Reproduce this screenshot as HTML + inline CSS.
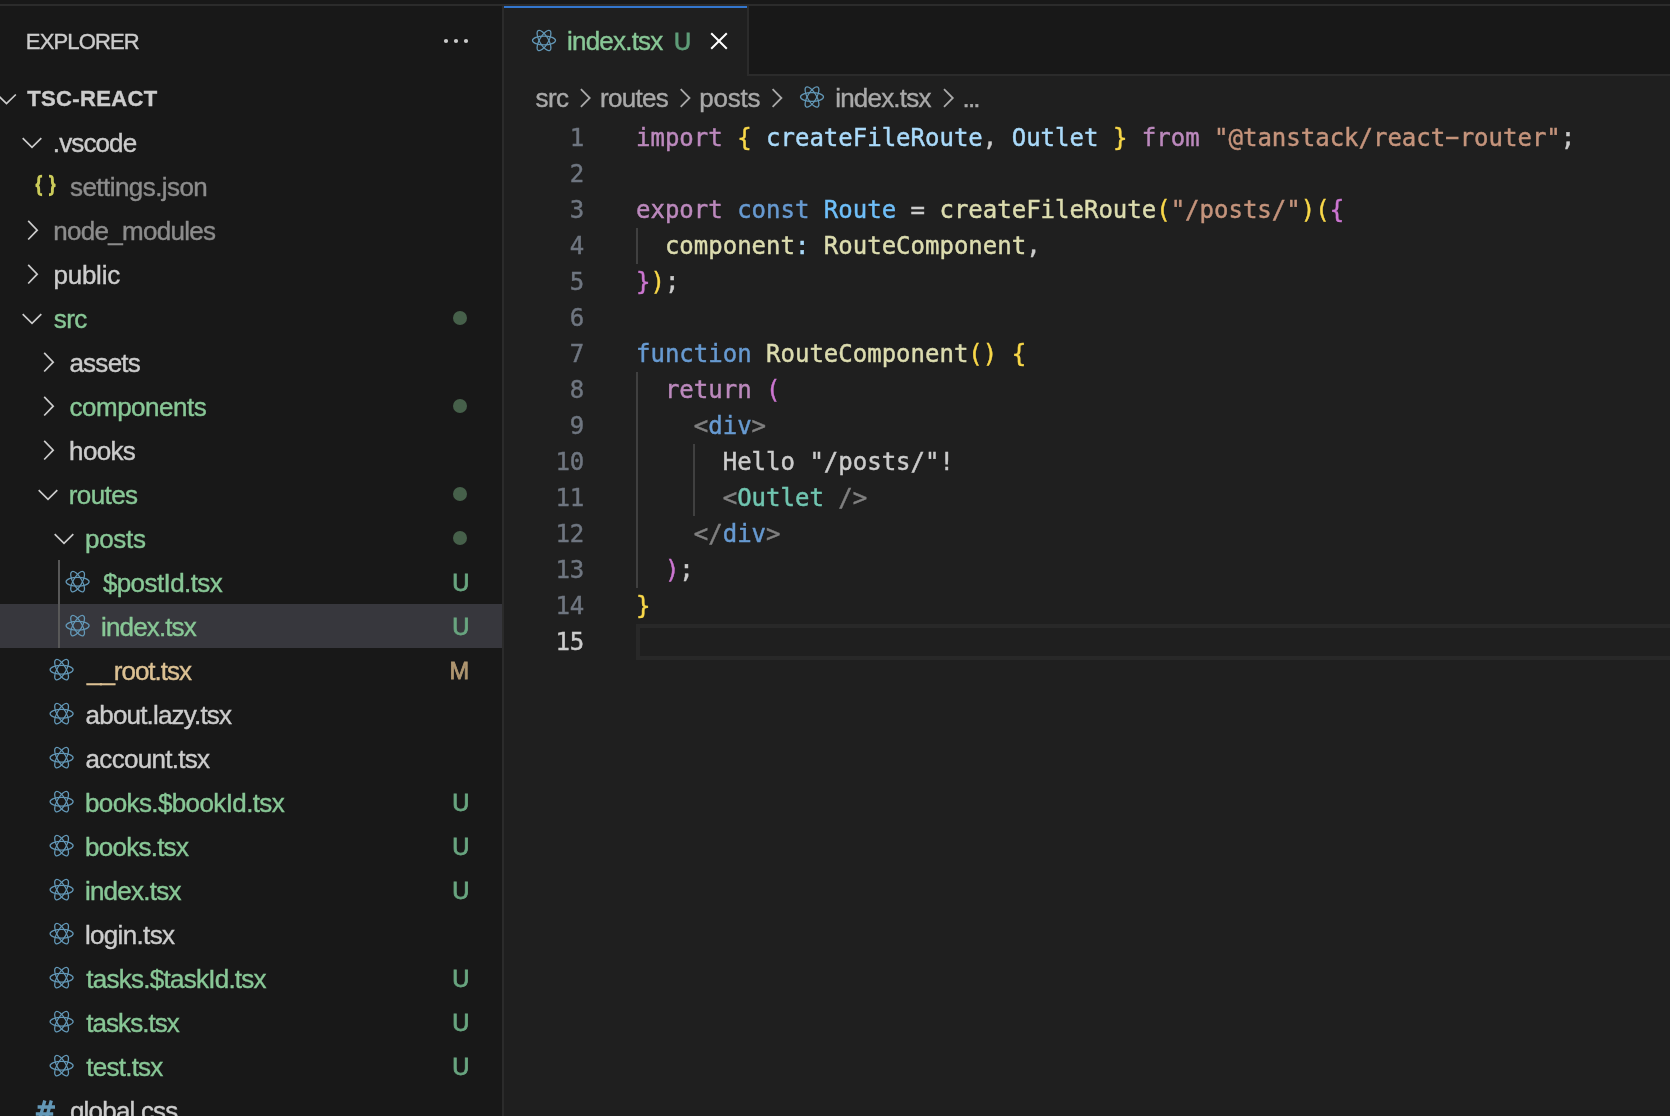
<!DOCTYPE html>
<html lang="en"><head><meta charset="utf-8"><title>index.tsx — tsc-react</title>
<style>
html,body{margin:0;padding:0;background:#181818;}
body{width:1670px;height:1116px;overflow:hidden;position:relative;font-family:"Liberation Sans",sans-serif;color:#cccccc;}
.abs{position:absolute;}
#topline{left:0;top:4px;width:1670px;height:2px;background:#2b2b2b;}
#side{will-change:transform;left:0;top:6px;width:502px;height:1110px;background:#181818;overflow:hidden;}
#sideborder{left:502px;top:6px;width:2px;height:1110px;background:#2b2b2b;}
#ed{will-change:transform;left:504px;top:6px;width:1166px;height:1110px;background:#1f1f1f;overflow:hidden;}
#tabbar{left:0;top:0;width:1166px;height:68px;background:#181818;border-bottom:2px solid #2b2b2b;}
#tab{left:0;top:0;width:243px;height:70px;background:#1f1f1f;border-right:2px solid #2b2b2b;}
#tabtop{left:0;top:0;width:243px;height:2px;background:#3376cd;}
.ui{position:absolute;white-space:nowrap;font-size:26px;line-height:44px;height:44px;-webkit-text-stroke:0.4px currentColor;}
.row{position:absolute;left:0;width:502px;height:44px;}
.sel{background:#37373d;}
.badge{position:absolute;white-space:nowrap;font-size:23.6px;line-height:44px;height:44px;text-align:right;right:32.8px;top:1px;-webkit-text-stroke:0.8px currentColor;}
.dot{position:absolute;left:452.7px;top:14.7px;width:14.6px;height:14.6px;border-radius:50%;background:#46604a;}
.code{position:absolute;left:132px;white-space:pre;font-family:"DejaVu Sans Mono","Liberation Mono",monospace;font-size:24px;line-height:36px;height:36px;color:#cccccc;-webkit-text-stroke:0.45px currentColor;}
.ln{position:absolute;left:0;width:80.3px;-webkit-text-stroke:0.45px currentColor;text-align:right;white-space:pre;font-family:"DejaVu Sans Mono","Liberation Mono",monospace;font-size:24px;line-height:36px;height:36px;color:#6f7680;}
.k{color:#bc89bd}.b{color:#679ad1}.v{color:#aadafa}.c{color:#6fbff9}.f{color:#dcdcaf}.s{color:#c5947c}
.y{color:#f9d849}.p{color:#cc76d1}.t{color:#808080}.o{color:#71c6b1}.w{color:#cccccc}
.hy{display:inline-block;transform:scaleX(1.9) translateY(-1px);}
.guide{position:absolute;width:2px;background:#404040;}
svg{position:absolute;overflow:visible;}
</style></head><body>
<svg width="0" height="0" style="position:absolute"><defs>
<g id="react" fill="none" stroke="#6398b7" stroke-width="1.25">
<ellipse cx="0" cy="0" rx="11.5" ry="4.4"/>
<ellipse cx="0" cy="0" rx="11.5" ry="4.4" transform="rotate(60)"/>
<ellipse cx="0" cy="0" rx="11.5" ry="4.4" transform="rotate(120)"/>
</g>
<path id="chd" d="M-9.3,-4.5 L0,4.6 L9.3,-4.5" fill="none" stroke="#cccccc" stroke-width="1.7"/>
<path id="chr" d="M-4.5,-9.3 L4.5,0 L-4.5,9.3" fill="none" stroke="#cccccc" stroke-width="1.7"/>
<path id="bcr" d="M-4.4,-8.8 L4.4,0 L-4.4,8.8" fill="none" stroke="#a9a9a9" stroke-width="1.8"/>
</defs></svg>
<div id="topline" class="abs"></div>

<div id="side" class="abs">
<div class="ui" style="left:25.86px;top:14px;font-size:22px;color:#cccccc;letter-spacing:-0.853px">EXPLORER</div>
<svg class="abs" style="left:0;top:0" width="502" height="80"><circle cx="446" cy="35" r="2.1" fill="#cccccc"/><circle cx="456" cy="35" r="2.1" fill="#cccccc"/><circle cx="466" cy="35" r="2.1" fill="#cccccc"/></svg>
<svg class="abs" style="left:0;top:70px" width="40" height="44"><use href="#chd" x="6.5" y="23"/></svg>
<div class="ui" style="left:27.29px;top:71px;font-size:22px;font-weight:bold;color:#cccccc;letter-spacing:0.362px">TSC-REACT</div>
<div class="row" style="top:114px">
<svg style="left:0;top:0" width="110" height="44"><use href="#chd" x="32" y="22.7"/></svg>
<div class="ui" style="left:52.84px;top:1px;color:#cccccc;letter-spacing:-0.889px">.vscode</div>
</div>
<div class="row" style="top:158px">
<svg style="left:0;top:0" width="110" height="44"><g fill="none" stroke="#cbcb5a" stroke-width="2.9"><path transform="translate(34.9,54.4) translate(0,-44)" d="M7.2,1.7 C4.4,1.7 3.8,2.4 3.8,4.8 L3.8,7.4 C3.8,9.8 2.9,11 0.6,11 C2.9,11 3.8,12.2 3.8,14.6 L3.8,17.2 C3.8,19.6 4.4,20.3 7.2,20.3"/><path transform="translate(56.2,54.4) translate(0,-44) scale(-1,1)" d="M7.2,1.7 C4.4,1.7 3.8,2.4 3.8,4.8 L3.8,7.4 C3.8,9.8 2.9,11 0.6,11 C2.9,11 3.8,12.2 3.8,14.6 L3.8,17.2 C3.8,19.6 4.4,20.3 7.2,20.3"/></g></svg>
<div class="ui" style="left:70.04px;top:1px;color:#8c8c8c;letter-spacing:-0.563px">settings.json</div>
</div>
<div class="row" style="top:202px">
<svg style="left:0;top:0" width="110" height="44"><use href="#chr" x="32.7" y="22.2"/></svg>
<div class="ui" style="left:53.22px;top:1px;color:#8c8c8c;letter-spacing:-0.714px">node_modules</div>
</div>
<div class="row" style="top:246px">
<svg style="left:0;top:0" width="110" height="44"><use href="#chr" x="32.7" y="22.2"/></svg>
<div class="ui" style="left:53.51px;top:1px;color:#cccccc;letter-spacing:-0.255px">public</div>
</div>
<div class="row" style="top:290px">
<svg style="left:0;top:0" width="110" height="44"><use href="#chd" x="32" y="22.7"/></svg>
<div class="ui" style="left:53.79px;top:1px;color:#88c796;letter-spacing:-0.629px">src</div>
<div class="dot"></div>
</div>
<div class="row" style="top:334px">
<svg style="left:0;top:0" width="110" height="44"><use href="#chr" x="48.7" y="22.2"/></svg>
<div class="ui" style="left:69.38px;top:1px;color:#cccccc;letter-spacing:-0.734px">assets</div>
</div>
<div class="row" style="top:378px">
<svg style="left:0;top:0" width="110" height="44"><use href="#chr" x="48.7" y="22.2"/></svg>
<div class="ui" style="left:69.59px;top:1px;color:#88c796;letter-spacing:-0.509px">components</div>
<div class="dot"></div>
</div>
<div class="row" style="top:422px">
<svg style="left:0;top:0" width="110" height="44"><use href="#chr" x="48.7" y="22.2"/></svg>
<div class="ui" style="left:69.12px;top:1px;color:#cccccc;letter-spacing:-0.654px">hooks</div>
</div>
<div class="row" style="top:466px">
<svg style="left:0;top:0" width="110" height="44"><use href="#chd" x="48" y="22.7"/></svg>
<div class="ui" style="left:68.69px;top:1px;color:#88c796;letter-spacing:-0.583px">routes</div>
<div class="dot"></div>
</div>
<div class="row" style="top:510px">
<svg style="left:0;top:0" width="110" height="44"><use href="#chd" x="64" y="22.7"/></svg>
<div class="ui" style="left:85.09px;top:1px;color:#88c796;letter-spacing:-0.334px">posts</div>
<div class="dot"></div>
</div>
<div class="row" style="top:554px">
<svg style="left:0;top:0" width="110" height="44"><use href="#react" x="77.6" y="21.7"/></svg>
<div class="ui" style="left:102.88px;top:1px;color:#88c796;letter-spacing:-0.589px">$postId.tsx</div>
<div class="badge" style="color:#69a680">U</div>
</div>
<div class="row sel" style="top:598px">
<svg style="left:0;top:0" width="110" height="44"><use href="#react" x="77.6" y="21.7"/></svg>
<div class="ui" style="left:101.06px;top:1px;color:#88c796;letter-spacing:-0.862px">index.tsx</div>
<div class="badge" style="color:#69a680">U</div>
</div>
<div class="row" style="top:642px">
<svg style="left:0;top:0" width="110" height="44"><use href="#react" x="61.6" y="21.7"/></svg>
<div class="ui" style="left:86.96px;top:1px;color:#dcc193;letter-spacing:-1.017px">__root.tsx</div>
<div class="badge" style="color:#af9670">M</div>
</div>
<div class="row" style="top:686px">
<svg style="left:0;top:0" width="110" height="44"><use href="#react" x="61.6" y="21.7"/></svg>
<div class="ui" style="left:85.6px;top:1px;color:#cccccc;letter-spacing:-0.816px">about.lazy.tsx</div>
</div>
<div class="row" style="top:730px">
<svg style="left:0;top:0" width="110" height="44"><use href="#react" x="61.6" y="21.7"/></svg>
<div class="ui" style="left:85.6px;top:1px;color:#cccccc;letter-spacing:-0.702px">account.tsx</div>
</div>
<div class="row" style="top:774px">
<svg style="left:0;top:0" width="110" height="44"><use href="#react" x="61.6" y="21.7"/></svg>
<div class="ui" style="left:84.97px;top:1px;color:#88c796;letter-spacing:-0.613px">books.$bookId.tsx</div>
<div class="badge" style="color:#69a680">U</div>
</div>
<div class="row" style="top:818px">
<svg style="left:0;top:0" width="110" height="44"><use href="#react" x="61.6" y="21.7"/></svg>
<div class="ui" style="left:85.0px;top:1px;color:#88c796;letter-spacing:-0.744px">books.tsx</div>
<div class="badge" style="color:#69a680">U</div>
</div>
<div class="row" style="top:862px">
<svg style="left:0;top:0" width="110" height="44"><use href="#react" x="61.6" y="21.7"/></svg>
<div class="ui" style="left:84.88px;top:1px;color:#88c796;letter-spacing:-0.756px">index.tsx</div>
<div class="badge" style="color:#69a680">U</div>
</div>
<div class="row" style="top:906px">
<svg style="left:0;top:0" width="110" height="44"><use href="#react" x="61.6" y="21.7"/></svg>
<div class="ui" style="left:84.92px;top:1px;color:#cccccc;letter-spacing:-0.663px">login.tsx</div>
</div>
<div class="row" style="top:950px">
<svg style="left:0;top:0" width="110" height="44"><use href="#react" x="61.6" y="21.7"/></svg>
<div class="ui" style="left:86.37px;top:1px;color:#88c796;letter-spacing:-0.746px">tasks.$taskId.tsx</div>
<div class="badge" style="color:#69a680">U</div>
</div>
<div class="row" style="top:994px">
<svg style="left:0;top:0" width="110" height="44"><use href="#react" x="61.6" y="21.7"/></svg>
<div class="ui" style="left:86.37px;top:1px;color:#88c796;letter-spacing:-0.974px">tasks.tsx</div>
<div class="badge" style="color:#69a680">U</div>
</div>
<div class="row" style="top:1038px">
<svg style="left:0;top:0" width="110" height="44"><use href="#react" x="61.6" y="21.7"/></svg>
<div class="ui" style="left:86.37px;top:1px;color:#88c796;letter-spacing:-0.767px">test.tsx</div>
<div class="badge" style="color:#69a680">U</div>
</div>
<div class="row" style="top:1082px">
<svg style="left:0;top:0" width="110" height="44"><g fill="none" stroke="#6398b7" stroke-width="3.3"><path d="M44.8,12.5 L39.3,32.5 M51.3,12.5 L45.8,32.5 M37.6,19 L55,19 M35.8,26 L53.2,26"/></g></svg>
<div class="ui" style="left:69.94px;top:1px;color:#cccccc;letter-spacing:-0.804px">global.css</div>
</div>
<div class="guide" style="left:58px;top:554px;height:88px;background:#585858"></div>
</div>
<div id="sideborder" class="abs"></div>
<div id="ed" class="abs">
<div id="tabbar" class="abs"></div>
<div id="tab" class="abs"><div id="tabtop" class="abs"></div>
<svg style="left:0;top:0" width="243" height="70"><use href="#react" x="40" y="34.5"/><path d="M207.2,27.2 L222.8,42.8 M222.8,27.2 L207.2,42.8" stroke="#ffffff" stroke-width="2" fill="none"/></svg>
<div class="ui" style="left:62.96px;top:13.0px;color:#88c796;letter-spacing:-0.777px">index.tsx</div>
<div class="ui" style="left:170px;top:14px;font-size:23.6px;-webkit-text-stroke:0.8px currentColor;color:#5f9d78">U</div>
</div>
<div class="ui" style="left:31.52px;top:70.0px;color:#a9a9a9;letter-spacing:-0.579px">src</div>
<div class="ui" style="left:95.99px;top:70.0px;color:#a9a9a9;letter-spacing:-0.72px">routes</div>
<div class="ui" style="left:195.15px;top:70.0px;color:#a9a9a9;letter-spacing:-0.198px">posts</div>
<div class="ui" style="left:331.16px;top:70.0px;color:#a9a9a9;letter-spacing:-0.791px">index.tsx</div>
<div class="ui" style="left:458.5px;top:70.0px;color:#a9a9a9;letter-spacing:-1.8px">...</div>
<svg style="left:0;top:70px" width="600" height="44"><use href="#bcr" x="81.29999999999995" y="22"/><use href="#bcr" x="181.10000000000002" y="22"/><use href="#bcr" x="273" y="22"/><use href="#bcr" x="444.4" y="22"/><use href="#react" x="308" y="21"/></svg>
<div class="abs" style="left:132px;top:618px;width:1100px;height:28px;border:4px solid #282828;"></div>
<div class="ln" style="top:114px;color:#6f7680">1</div>
<div class="code" style="top:114px"><span class="k">import</span> <span class="y">{</span> <span class="v">createFileRoute</span>, <span class="v">Outlet</span> <span class="y">}</span> <span class="k">from</span> <span class="s">"@tanstack/react<span class="hy">-</span>router"</span>;</div>
<div class="ln" style="top:150px;color:#6f7680">2</div>
<div class="ln" style="top:186px;color:#6f7680">3</div>
<div class="code" style="top:186px"><span class="k">export</span> <span class="b">const</span> <span class="c">Route</span> = <span class="f">createFileRoute</span><span class="y">(</span><span class="s">"/posts/"</span><span class="y">)(</span><span class="p">{</span></div>
<div class="ln" style="top:222px;color:#6f7680">4</div>
<div class="code" style="top:222px">  <span class="f">component</span><span class="v">:</span> <span class="f">RouteComponent</span>,</div>
<div class="ln" style="top:258px;color:#6f7680">5</div>
<div class="code" style="top:258px"><span class="p">}</span><span class="y">)</span>;</div>
<div class="ln" style="top:294px;color:#6f7680">6</div>
<div class="ln" style="top:330px;color:#6f7680">7</div>
<div class="code" style="top:330px"><span class="b">function</span> <span class="f">RouteComponent</span><span class="y">()</span> <span class="y">{</span></div>
<div class="ln" style="top:366px;color:#6f7680">8</div>
<div class="code" style="top:366px">  <span class="k">return</span> <span class="p">(</span></div>
<div class="ln" style="top:402px;color:#6f7680">9</div>
<div class="code" style="top:402px">    <span class="t">&lt;</span><span class="b">div</span><span class="t">&gt;</span></div>
<div class="ln" style="top:438px;color:#6f7680">10</div>
<div class="code" style="top:438px">      Hello "/posts/"!</div>
<div class="ln" style="top:474px;color:#6f7680">11</div>
<div class="code" style="top:474px">      <span class="t">&lt;</span><span class="o">Outlet</span> <span class="t">/&gt;</span></div>
<div class="ln" style="top:510px;color:#6f7680">12</div>
<div class="code" style="top:510px">    <span class="t">&lt;/</span><span class="b">div</span><span class="t">&gt;</span></div>
<div class="ln" style="top:546px;color:#6f7680">13</div>
<div class="code" style="top:546px">  <span class="p">)</span>;</div>
<div class="ln" style="top:582px;color:#6f7680">14</div>
<div class="code" style="top:582px"><span class="y">}</span></div>
<div class="ln" style="top:618px;color:#cccccc">15</div>
<div class="guide" style="left:132px;top:222px;height:36px;background:#404040"></div>
<div class="guide" style="left:132px;top:366px;height:216px;background:#404040"></div>
<div class="guide" style="left:189.39999999999998px;top:438px;height:72px;background:#404040"></div>
</div>
</body></html>
